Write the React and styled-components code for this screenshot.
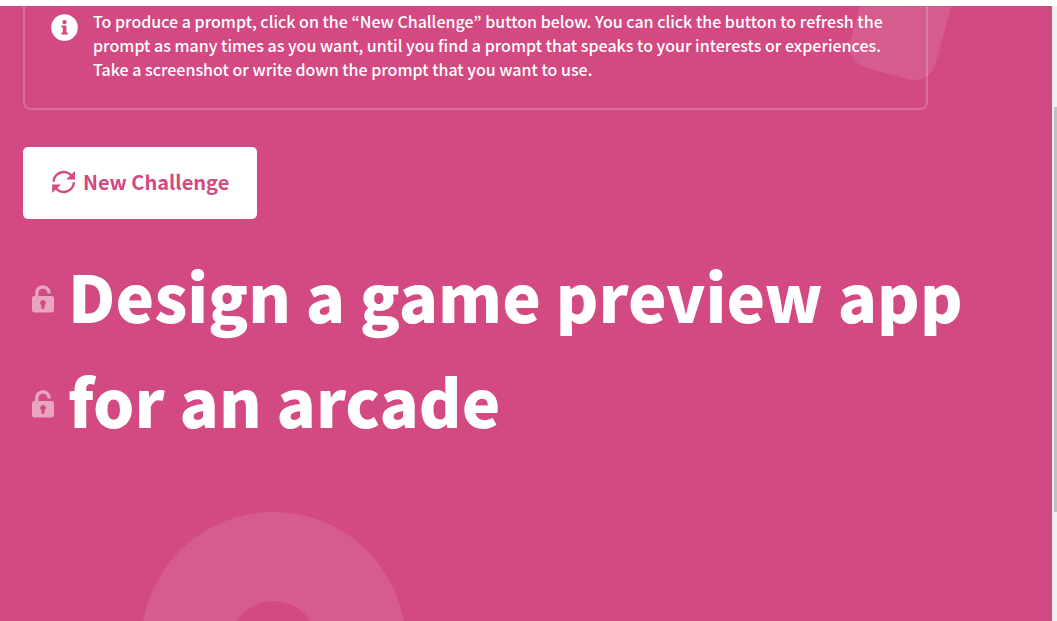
import React from "react";
import styled, { createGlobalStyle } from "styled-components";

const GlobalStyle = createGlobalStyle`
  *, *::before, *::after { box-sizing: border-box; }
  body {
    margin: 0;
    background: #fff;
    font-family: "Source Sans Pro", "Noto Sans CJK KR", sans-serif;
  }
`;

const Page = styled.div`
  display: flex;
  height: 100vh;
  padding-top: 6px;
  overflow: hidden;
`;

const Main = styled.main`
  position: relative;
  flex: 1;
  min-width: 0;
  overflow: hidden;
  padding: 0 24px 0 23px;
  background: #d34981;
  color: #fff;
`;

const Shape = styled.svg`
  position: absolute;
  left: ${(p) => p.$left}px;
  top: ${(p) => p.$top}px;
  fill: #fff;
  opacity: 0.1;
`;

const Content = styled.div`
  position: relative;
  display: flex;
  flex-direction: column;
  align-items: flex-start;
`;

const Notice = styled.section`
  display: flex;
  gap: 15px;
  width: 100%;
  max-width: 905px;
  padding: 3px 16px 27px 26px;
  border: 2px solid rgba(255, 255, 255, 0.2);
  border-top: 0;
  border-radius: 0 0 8px 8px;
`;

const InfoIcon = styled.svg`
  flex: none;
  width: 27px;
  height: 27px;
  margin-top: 5px;
`;

const NoticeText = styled.p`
  margin: 0;
  font-size: 16px;
  font-weight: 500;
  line-height: 24px;
`;

const ChallengeButton = styled.button`
  display: flex;
  align-items: center;
  gap: 7px;
  height: 72px;
  margin-top: 37px;
  padding: 0 28px 2px 29px;
  border: 0;
  border-radius: 5px;
  background: #fff;
  color: #d34981;
  font: 700 20px/30px "Source Sans Pro", "Noto Sans CJK KR", sans-serif;
  cursor: pointer;
`;

const Prompt = styled.h1`
  margin: 24px 0 0;
  font-size: 65px;
  font-weight: 900;
  line-height: 105px;
`;

const PromptLine = styled.span`
  display: flex;
  align-items: center;
  gap: 14px;
  padding-left: 9px;
`;

const LockButton = styled.button`
  display: flex;
  flex: none;
  margin-top: 6px;
  padding: 0;
  border: 0;
  background: none;
  color: #fff;
  opacity: 0.5;
  cursor: pointer;
`;

const ScrollTrack = styled.div`
  flex: none;
  width: 5px;
  padding: 101px 0 0 2px;
  background: #f0f0f0;
`;

const ScrollThumb = styled.div`
  height: 405px;
  background: #c1c1c1;
`;

function RefreshIcon() {
  return (
    <svg width="24" height="24" viewBox="0 0 24 24" aria-hidden="true">
      <g fill="none" stroke="currentColor" strokeWidth="2.5">
        <path d="M1.6 11.8A10 9.8 0 0 1 20 6.6" />
        <path d="M21.8 12.2A10 9.8 0 0 1 3.4 17.4" />
      </g>
      <path fill="currentColor" d="M23 1V9.4H14.2ZM0.2 23V14.6H9Z" />
    </svg>
  );
}

function LockIcon() {
  return (
    <svg width="22" height="28" viewBox="0 0 22 28" aria-hidden="true">
      <path
        fill="none"
        stroke="currentColor"
        strokeWidth="3.4"
        d="M4.8 11V7.6A6 6 0 0 1 10.8 2C14.4 2 17.2 4.2 17.2 8.4"
      />
      <path
        fill="currentColor"
        fillRule="evenodd"
        d="M2.4 11H19.6A2.4 2.4 0 0 1 22 13.4V25A2.4 2.4 0 0 1 19.6 27.4H2.4A2.4 2.4 0 0 1 0 25V13.4A2.4 2.4 0 0 1 2.4 11ZM11 15A2.8 2.8 0 0 0 9.4 20.1V22.4A1.6 1.6 0 0 0 12.6 22.4V20.1A2.8 2.8 0 0 0 11 15Z"
      />
    </svg>
  );
}

function Line({ label, children }) {
  return (
    <PromptLine>
      <LockButton type="button" aria-label={label}>
        <LockIcon />
      </LockButton>
      {children}
    </PromptLine>
  );
}

export default function App() {
  return (
    <>
      <GlobalStyle />
      <Page>
        <Main>
          <Shape $left={840} $top={0} width="120" height="80" viewBox="0 6 120 80" aria-hidden="true">
            <rect x="2" y="-35" width="88" height="120" rx="22" transform="rotate(15 90 85)" />
          </Shape>
          <Shape $left={140} $top={505} width="268" height="268" viewBox="0 0 268 268" aria-hidden="true">
            <path
              fillRule="evenodd"
              d="M133.5 1A132.5 132.5 0 1 1 133.5 266A132.5 132.5 0 1 1 133.5 1ZM133.5 90A44 44 0 1 0 133.5 178A44 44 0 1 0 133.5 90Z"
            />
          </Shape>
          <Content>
            <Notice>
              <InfoIcon viewBox="0 0 27 27" aria-hidden="true">
                <circle cx="13.5" cy="13.5" r="13.3" fill="#fff" />
                <circle cx="13.5" cy="8.1" r="2.2" fill="#d34981" />
                <path fill="#d34981" d="M10.4 11.4H15.4V18.4H16.8V20.6H10.4V18.4H11.8V13.6H10.4Z" />
              </InfoIcon>
              <NoticeText>
                To produce a prompt, click on the “New Challenge” button below. You can click the button to refresh the
                prompt as many times as you want, until you find a prompt that speaks to your interests or experiences.
                Take a screenshot or write down the prompt that you want to use.
              </NoticeText>
            </Notice>
            <ChallengeButton type="button">
              <RefreshIcon />
              New Challenge
            </ChallengeButton>
            <Prompt>
              <Line label="Lock design task">Design a game preview app</Line>
              <Line label="Lock audience">for an arcade</Line>
            </Prompt>
          </Content>
        </Main>
        <ScrollTrack>
          <ScrollThumb />
        </ScrollTrack>
      </Page>
    </>
  );
}
